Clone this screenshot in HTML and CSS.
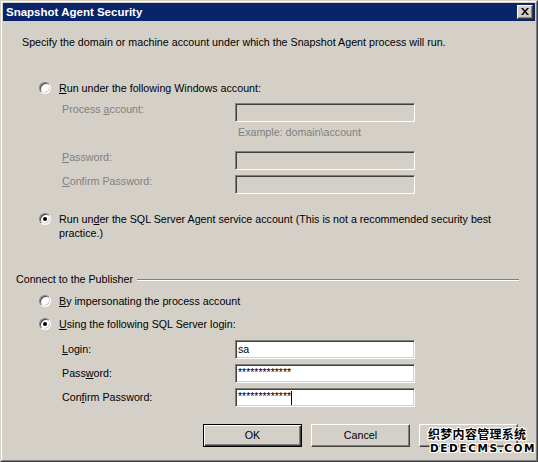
FILE: index.html
```html
<!DOCTYPE html>
<html>
<head>
<meta charset="utf-8">
<title>Snapshot Agent Security</title>
<link rel="stylesheet" href="styles.css">
</head>
<body>
<div class="window">
  <div class="frame">
    <div class="titlebar">
      <span class="title">Snapshot Agent Security</span>
      <span class="close-btn"><svg width="8" height="7" viewBox="0 0 8 7"><path d="M0 0h2l2 2.5L6 0h2L5 3.5 8 7H6L4 4.5 2 7H0l3-3.5z" fill="#000"/></svg></span>
    </div>
    <div class="content">
      <p class="desc">Specify the domain or machine account under which the Snapshot Agent process will run.</p>

      <div class="option opt-windows">
        <span class="radio"></span>
        <span class="opt-label"><u>R</u>un under the following Windows account:</span>
      </div>

      <div class="field disabled field-process">
        <span class="field-label">Process <u>a</u>ccount:</span>
        <span class="textbox"></span>
      </div>
      <div class="hint">Example: domain\account</div>
      <div class="field disabled field-pw">
        <span class="field-label"><u>P</u>assword:</span>
        <span class="textbox"></span>
      </div>
      <div class="field disabled field-next">
        <span class="field-label"><u>C</u>onfirm Password:</span>
        <span class="textbox"></span>
      </div>

      <div class="option opt-agent">
        <span class="radio checked"></span>
        <span class="opt-label wrap">Run un<u>d</u>er the SQL Server Agent service account (This is not a recommended security best <span>practice.)</span></span>
      </div>

      <div class="group-header">
        <span class="group-title">Connect to the Publisher</span>
        <span class="group-line"></span>
      </div>

      <div class="option opt-impersonate">
        <span class="radio"></span>
        <span class="opt-label"><u>B</u>y impersonating the process account</span>
      </div>
      <div class="option opt-login">
        <span class="radio checked"></span>
        <span class="opt-label"><u>U</u>sing the following SQL Server login:</span>
      </div>

      <div class="field active field-login">
        <span class="field-label"><u>L</u>ogin:</span>
        <span class="textbox"><span class="value">sa</span></span>
      </div>
      <div class="field active field-next">
        <span class="field-label">Pass<u>w</u>ord:</span>
        <span class="textbox"><span class="value stars">*************</span></span>
      </div>
      <div class="field active field-next">
        <span class="field-label">Con<u>f</u>irm Password:</span>
        <span class="textbox"><span class="value stars">*************</span><span class="caret"></span></span>
      </div>

      <div class="buttons">
        <span class="btn default">OK</span>
        <span class="btn">Cancel</span>
        <span class="btn"></span>
      </div>
    </div>
  </div>
  <div class="watermark">
    <div class="wm-cn">织梦内容管理系统</div>
    <div class="wm-en">DEDECMS.COM</div>
  </div>
</div>
</body>
</html>
```

FILE: styles.css
```css
* { box-sizing: border-box; }
html, body { margin: 0; padding: 0; }
body {
  width: 538px;
  height: 462px;
  overflow: hidden;
  background: #D4D0C8;
  font-family: "Liberation Sans", Arial, sans-serif;
  font-size: 10.7px;
  color: #000;
}
u { text-decoration: underline; text-underline-offset: 1px; }

.window {
  position: relative;
  width: 538px;
  height: 462px;
  background: #D4D0C8;
  border: 1px solid;
  border-color: #D4D0C8 #404040 #404040 #D4D0C8;
}
.frame {
  height: 100%;
  border: 1px solid;
  border-color: #FFFFFF #808080 #808080 #FFFFFF;
  padding: 1px;
}

.titlebar {
  height: 18px;
  background: #0A246A;
  display: flex;
  align-items: center;
  justify-content: space-between;
  padding: 0 2px 0 3px;
}
.title {
  color: #fff;
  font-weight: bold;
  font-size: 11.5px;
  line-height: 13px;
}
.close-btn {
  width: 16px;
  height: 14px;
  background: #D4D0C8;
  border: 1px solid;
  border-color: #FFFFFF #404040 #404040 #FFFFFF;
  box-shadow: inset -1px -1px 0 #808080;
  display: flex;
  align-items: center;
  justify-content: center;
  padding-bottom: 1px;
}
.close-btn svg { display: block; }

.content {
  display: flex;
  flex-direction: column;
  align-items: flex-start;
}
.desc {
  margin: 15px 0 0 19px;
  line-height: 13px;
}

.option {
  display: flex;
  align-items: flex-start;
  margin-left: 36px;
  line-height: 13px;
}
.radio {
  flex: none;
  position: relative;
  width: 12px;
  height: 12px;
  margin-right: 8px;
  border-radius: 50%;
  background: #fff;
  border: 1px solid;
  border-color: #808080 #FFFFFF #FFFFFF #808080;
  box-shadow: inset 1px 1px 0 #404040, inset -1px -1px 0 #D4D0C8;
}
.radio.checked::after {
  content: "";
  position: absolute;
  left: 3px;
  top: 3px;
  width: 4px;
  height: 4px;
  border-radius: 50%;
  background: #000;
}
.opt-windows { margin-top: 33px; }
.opt-agent { margin-top: 18px; line-height: 14px; }
.opt-agent .radio { margin-top: 1px; }
.opt-label.wrap { width: 445px; }
.opt-impersonate { margin-top: 9px; }
.opt-login { margin-top: 10px; }

.field {
  display: flex;
  margin-left: 59px;
  height: 19px;
  line-height: 13px;
}
.field.disabled { align-items: flex-start; color: #808080; }
.field.active { align-items: center; }
.field-label { width: 173px; }
.field-process { margin-top: 8px; }
.field-pw { margin-top: 12px; }
.field-next { margin-top: 5px; }
.field-login { margin-top: 9px; }

.textbox {
  position: relative;
  display: flex;
  align-items: center;
  width: 180px;
  height: 19px;
  border: 1px solid;
  border-color: #808080 #FFFFFF #FFFFFF #808080;
  box-shadow: inset 1px 1px 0 #404040, inset -1px -1px 0 #D4D0C8;
  background: #fff;
  padding-left: 2px;
  color: #000;
}
.disabled .textbox { background: #D4D0C8; }
.value { line-height: 13px; }
.stars { font-size: 10.5px; margin-top: -2px; }
.caret {
  width: 1px;
  height: 14px;
  background: #000;
}

.hint {
  margin: 4px 0 0 235px;
  color: #808080;
  line-height: 13px;
}

.group-header {
  display: flex;
  align-items: center;
  width: 503px;
  margin: 33px 0 0 13px;
  line-height: 13px;
}
.group-line {
  flex: 1;
  height: 2px;
  margin-left: 4px;
  margin-top: 1px;
  border-top: 1px solid #808080;
  border-bottom: 1px solid #FFFFFF;
}

.buttons {
  display: flex;
  gap: 9px;
  margin: 17px 0 0 200px;
}
.btn {
  width: 99px;
  height: 23px;
  display: flex;
  align-items: center;
  justify-content: center;
  border: 1px solid;
  border-color: #FFFFFF #404040 #404040 #FFFFFF;
  box-shadow: inset -1px -1px 0 #808080;
  line-height: 13px;
}
.btn.default {
  border-color: #000;
  box-shadow: inset 1px 1px 0 #FFFFFF, inset -1px -1px 0 #404040, inset -2px -2px 0 #808080;
}

.watermark {
  position: absolute;
  left: 427px;
  top: 425px;
  color: #000;
  font-weight: bold;
  text-shadow: 1px 0 #fff, -1px 0 #fff, 0 1px #fff, 0 -1px #fff,
               1px 1px #fff, -1px -1px #fff, 1px -1px #fff, -1px 1px #fff;
}
.wm-cn {
  font-family: "Noto Sans CJK SC", sans-serif;
  font-size: 12px;
  line-height: 16px;
  letter-spacing: 0.3px;
}
.wm-en {
  font-family: "DejaVu Sans", sans-serif;
  font-size: 10.5px;
  line-height: 12px;
  letter-spacing: 1.6px;
  margin-left: 2px;
}
```
